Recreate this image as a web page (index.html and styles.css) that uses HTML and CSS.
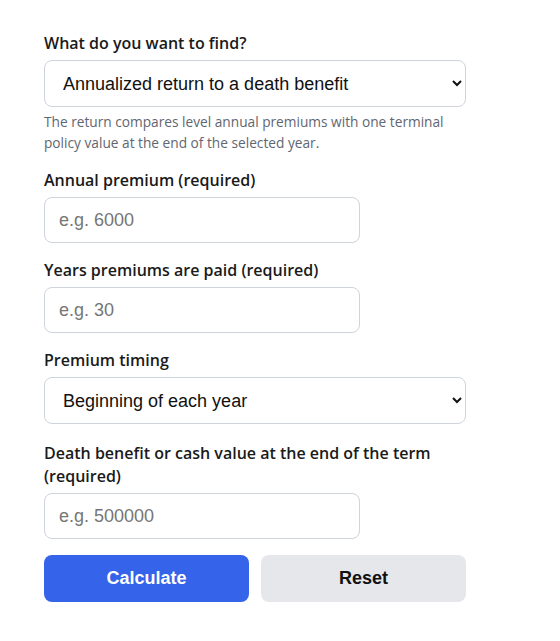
FILE: index.html
```html
<!DOCTYPE html>
<html lang="en">
<head>
  <meta charset="UTF-8">
  <title>Life insurance return calculator</title>
  <meta name="viewport" content="width=device-width, initial-scale=1.0">
  <link rel="stylesheet" href="styles.css">
</head>
<body>

<form class="calc-form" id="calcForm">
  <div class="field">
    <label class="field-label" for="mode">What do you want to find?</label>
    <select class="field-select" id="mode">
      <option>Annualized return to a death benefit</option>
      <option>Annualized return to cash value</option>
    </select>
    <div class="field-help">The return compares level annual premiums with one terminal policy value at the end of the selected year.</div>
  </div>

  <div class="field">
    <label class="field-label" for="premium">Annual premium (required)</label>
    <input class="field-input" id="premium" type="text" placeholder="e.g. 6000">
  </div>

  <div class="field">
    <label class="field-label" for="years">Years premiums are paid (required)</label>
    <input class="field-input" id="years" type="text" placeholder="e.g. 30">
  </div>

  <div class="field field-timing">
    <label class="field-label" for="timing">Premium timing</label>
    <select class="field-select" id="timing">
      <option>Beginning of each year</option>
      <option>End of each year</option>
    </select>
  </div>

  <div class="field">
    <label class="field-label" for="value">Death benefit or cash value at the end of the term (required)</label>
    <input class="field-input" id="value" type="text" placeholder="e.g. 500000">
  </div>

  <div class="actions">
    <button class="btn btn-primary" type="button">Calculate</button>
    <button class="btn btn-secondary" type="reset">Reset</button>
  </div>
</form>

</body>
</html>
```

FILE: styles.css
```css
html, body {
  margin: 0; padding: 0;
  background: #fff;
  color: #1a1a1a;
}
body { font-family: 'Open Sans', 'Noto Sans', Arial, sans-serif; }

.calc-form {
  width: 422px;
  padding: 32px 44px 24px 44px;
}

/* Поля формы */
.field { margin-bottom: 16px; }
.field-timing { margin-bottom: 18px; }
.field-label {
  display: block;
  font-size: 16px;
  font-weight: 600;
  line-height: 23px;
  margin-bottom: 5px;
}
.field-help {
  margin-top: 4px;
  font-size: 13.7px;
  line-height: 21px;
  color: #5f6670;
}
.field-input,
.field-select {
  box-sizing: border-box;
  height: 46px;
  border: 1px solid #cfd4dc;
  border-radius: 8px;
  background: #fff;
  font-family: 'Liberation Sans', Arial, sans-serif;
  font-size: 18px;
  color: #111;
  padding: 0 14px;
  display: block;
}
.field-input { width: 316px; }
.field-input::placeholder { color: #767676; }
.field-select { width: 100%; height: 47px; }

/* Кнопки */
.actions {
  display: grid;
  grid-template-columns: 1fr 1fr;
  gap: 12px;
}
.btn {
  height: 47px;
  border: 0;
  border-radius: 8px;
  font-family: 'Liberation Sans', Arial, sans-serif;
  font-size: 18px;
  font-weight: 700;
  cursor: pointer;
}
.btn-primary { background: #3563e9; color: #fff; }
.btn-secondary { background: #e5e7eb; color: #111; }
```
